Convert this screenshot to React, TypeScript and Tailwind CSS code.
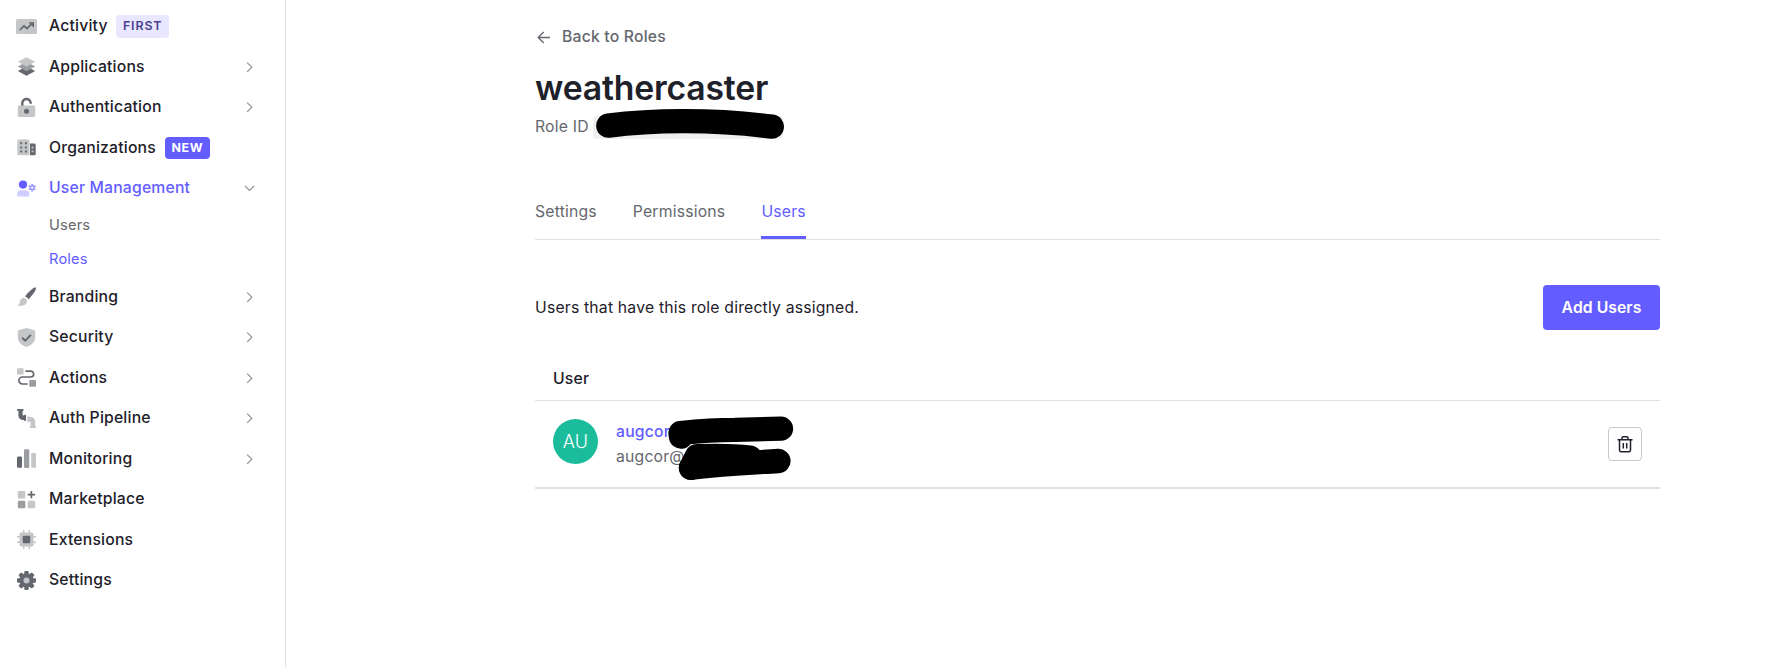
import type { ReactNode } from 'react';

const D = '#65676e';
const M = '#9b9da1';
const L = '#c5c6c8';

function Icon({ children }: { children: ReactNode }) {
  return (
    <svg className="h-[23px] w-[23px] shrink-0" viewBox="0 0 23 23" fill="none">
      {children}
    </svg>
  );
}

function teeth(cx: number, cy: number, w: number, r: number, n: number) {
  return Array.from({ length: n }, (_, i) => (
    <rect key={i} x={cx - w / 2} y={cy - r} width={w} height={r} rx={w / 4} transform={`rotate(${(360 / n) * i} ${cx} ${cy})`} />
  ));
}

const icons: Record<string, ReactNode> = {
  activity: (
    <Icon>
      <rect x="1" y="4" width="21" height="15" rx="1.5" fill={L} />
      <path d="M4.8 15 9 10.8l3 2.7 4.8-4.8" stroke={D} strokeWidth="1.7" />
      <path d="M13.4 7.3H19v5.4z" fill={D} />
    </Icon>
  ),
  applications: (
    <Icon>
      <path d="M11.5 11.6 20.2 16l-8.7 4.8L2.8 16z" fill={D} />
      <path d="M11.5 6.8l8.7 4.6-8.7 4.8-8.7-4.8z" fill={M} />
      <path d="M11.5 2.2l8.7 4.6-8.7 4.8-8.7-4.8z" fill={L} />
    </Icon>
  ),
  authentication: (
    <Icon>
      <path d="M7.3 10V7.4a4.2 4.2 0 0 1 8.4-.4v.8" stroke={D} strokeWidth="2.4" />
      <rect x="2.8" y="9.5" width="17.4" height="11.5" rx="1.4" fill={L} />
      <circle cx="11.5" cy="15.3" r="2.5" fill={D} />
    </Icon>
  ),
  organizations: (
    <Icon>
      <rect x="2.3" y="3.5" width="12.2" height="15.8" rx="1.4" fill={L} />
      <path d="M15 7.5h4.3a1.4 1.4 0 0 1 1.4 1.4v9a1.4 1.4 0 0 1-1.4 1.4H15z" fill={D} />
      <path d="M5.2 6.2h2v2h-2zM9.9 6.2h2v2h-2zM5.2 10.4h2v2h-2zM9.9 10.4h2v2h-2zM5.2 14.6h2v2h-2zM9.9 14.6h2v2h-2z" fill={D} />
      <path d="M16.6 10.6h1.8v1.8h-1.8zM16.6 14.4h1.8v1.8h-1.8z" fill={L} />
    </Icon>
  ),
  users: (
    <Icon>
      <circle cx="8" cy="7.6" r="4.1" fill="#635dff" />
      <path d="M2.2 19.5v-2.6a3.7 3.7 0 0 1 3.7-3.7h4.7a3.7 3.7 0 0 1 3.7 3.7v2.6z" fill="#d0ceff" />
      <g fill="#a19eff">
        {teeth(17.2, 10.7, 1.8, 3.9, 6)}
        <circle cx="17.2" cy="10.7" r="2.6" />
      </g>
      <circle cx="17.2" cy="10.7" r="1" fill="#fff" />
    </Icon>
  ),
  branding: (
    <Icon>
      <path d="M20.9 2.3c.5 2.5-1.7 6.2-7.5 12.2-.5-1.5-1.7-2.6-3.4-3C14.2 6.2 18.3 2.5 20.9 2.3z" fill={D} />
      <path d="M8.6 13.1c2 .1 3.5 1.7 3.3 3.6-.3 2.8-3.5 4.7-9.7 3.9 2.6-1.1 2.3-2.7 2.8-4.4.5-1.9 1.9-3.1 3.6-3.1z" fill={L} />
    </Icon>
  ),
  security: (
    <Icon>
      <path d="M11.5 2 20.2 4.6V11c0 5.2-3.7 8.3-8.7 10-5-1.7-8.7-4.8-8.7-10V4.6z" fill={L} />
      <path d="m7.2 11.7 3 3 5.7-5.8" stroke={D} strokeWidth="2" />
    </Icon>
  ),
  actions: (
    <Icon>
      <rect x="2" y="2.2" width="6.6" height="6.4" rx=".7" fill={L} />
      <rect x="14.3" y="14.1" width="6.7" height="6.6" rx=".7" fill={M} />
      <path d="M10.5 5.2h5.3a2.9 2.9 0 0 1 0 5.8H7.4a3.5 3.5 0 0 0 0 7h5.3" stroke={D} strokeWidth="1.7" />
    </Icon>
  ),
  pipeline: (
    <Icon>
      <path d="M2 2h6.5v1.8h-.9v3.4c0 .9.5 1.4 1.4 1.4h.3v-.9H11v6.3H9.3v-.9h-.9c-3.1 0-5-1.8-5-4.9V3.8H2z" fill={D} />
      <path d="M12.5 9.2h1.7v.8h1.2c3 0 4.8 1.8 4.8 4.8v4.5h.9V21h-6.4v-1.7h.9v-3.5c0-.9-.5-1.4-1.4-1.4v.8h-1.7z" fill={L} />
    </Icon>
  ),
  monitoring: (
    <Icon>
      <rect x="2" y="9.5" width="5" height="11.2" rx="1.2" fill={D} />
      <rect x="9" y="2.2" width="5.3" height="18.7" rx="1.2" fill={M} />
      <rect x="16.2" y="6" width="4.8" height="14.7" rx="1.2" fill={L} />
    </Icon>
  ),
  marketplace: (
    <Icon>
      <rect x="2.8" y="3" width="7.5" height="7.4" rx="1.2" fill={L} />
      <rect x="2.8" y="12.8" width="7.5" height="7.4" rx="1.2" fill={M} />
      <rect x="12.7" y="12.8" width="7.5" height="7.4" rx="1.2" fill={L} />
      <path d="M16.4 3.1v7.2M12.7 6.7h7.4" stroke={D} strokeWidth="1.7" />
    </Icon>
  ),
  extensions: (
    <Icon>
      <rect x="4.4" y="4.4" width="14.2" height="14.2" rx="2" fill={L} />
      <path d="M8.7 2v19M14.3 2v19M2 8.7h19M2 14.3h19" stroke={L} strokeWidth="1.5" />
      <rect x="7.7" y="7.7" width="7.6" height="7.6" rx="1" fill={D} />
    </Icon>
  ),
  settings: (
    <Icon>
      <g fill={D}>
        {teeth(11.5, 11.5, 4.4, 9.5, 8)}
        <circle cx="11.5" cy="11.5" r="7.2" />
      </g>
      <circle cx="11.5" cy="11.5" r="3" fill={L} />
    </Icon>
  ),
};

type Item = { icon: string; label: string; chevron?: boolean; badge?: ReactNode };

const top: Item[] = [
  {
    icon: 'activity',
    label: 'Activity',
    badge: (
      <span className="ml-2 flex h-[23px] w-[53px] items-center justify-center rounded-[4px] bg-[#e9e7ff] pl-px text-[12.4px] font-semibold tracking-[0.9px] text-[#4b3f8f]">FIRST</span>
    ),
  },
  { icon: 'applications', label: 'Applications', chevron: true },
  { icon: 'authentication', label: 'Authentication', chevron: true },
  {
    icon: 'organizations',
    label: 'Organizations',
    badge: (
      <span className="ml-[9px] flex h-[22px] w-[45px] items-center justify-center rounded-[4px] bg-[#635dff] pt-px text-[12.4px] font-bold tracking-[0.6px] text-white">NEW</span>
    ),
  },
];

const bottom: Item[] = [
  { icon: 'branding', label: 'Branding', chevron: true },
  { icon: 'security', label: 'Security', chevron: true },
  { icon: 'actions', label: 'Actions', chevron: true },
  { icon: 'pipeline', label: 'Auth Pipeline', chevron: true },
  { icon: 'monitoring', label: 'Monitoring', chevron: true },
  { icon: 'marketplace', label: 'Marketplace' },
  { icon: 'extensions', label: 'Extensions' },
  { icon: 'settings', label: 'Settings' },
];

function Row({ icon, label, chevron, badge }: Item) {
  return (
    <a className="flex h-[40.5px] items-center pr-[30px] pl-[15px] text-[15.75px] font-medium tracking-[0.18px] text-[#1e212a]">
      {icons[icon]}
      <span className="ml-[11px] leading-5">{label}</span>
      {badge}
      {chevron && (
        <svg className="ml-auto h-3 w-3" viewBox="0 0 12 12" fill="none">
          <path d="m4.2 1.6 4.6 4.6-4.6 4.6" stroke="#8e9095" strokeWidth="1.2" />
        </svg>
      )}
    </a>
  );
}

export default function App() {
  return (
    <div className="flex h-[667px] w-[1767px] overflow-hidden bg-white font-['Inter',sans-serif] text-[15.75px] tracking-[0.19px] text-[#1e212a]">
      <nav className="w-[286px] shrink-0 border-r border-[#e0e1e3] pt-[6px]">
        {top.map((item) => (
          <Row key={item.label} {...item} />
        ))}
        <a className="flex h-[40.5px] items-center pr-[30px] pl-[15px] font-medium tracking-[0.17px] text-[#635dff]">
          {icons.users}
          <span className="ml-[11px] leading-5">User Management</span>
          <svg className="ml-auto h-3 w-3" viewBox="0 0 12 12" fill="none">
            <path d="m2 4 4.5 4.5L11 4" stroke="#8e9095" strokeWidth="1.2" />
          </svg>
        </a>
        <div className="flex h-[68px] flex-col pl-[49px] text-[14.625px]">
          <a className="flex h-[34px] items-center pt-px text-[#65676e]">Users</a>
          <a className="flex h-[34px] items-center pt-px text-[#635dff]">Roles</a>
        </div>
        {bottom.map((item) => (
          <Row key={item.label} {...item} />
        ))}
      </nav>

      <main className="ml-[249px] w-[1125px] pt-[25px]">
        <a className="flex h-6 items-center font-medium text-[#65676e]">
          <svg className="mr-3 ml-[2px] h-[13px] w-[13px]" viewBox="0 0 13 13" fill="none">
            <path d="M13 6.5H1.5M6.7 1 1.2 6.5l5.5 5.5" stroke="#65676e" strokeWidth="1.3" />
          </svg>
          Back to Roles
        </a>
        <h1 className="mt-[19px] h-10 text-[33.75px] leading-10 font-semibold tracking-[-0.18px]">weathercaster</h1>
        <div className="relative mt-2 flex h-[23px] items-center text-[#65676e]">
          <span className="-mt-px">Role ID</span>
          <span className="ml-1 h-[23px] w-[190px] rounded-[4px] bg-[#eff0f2]" />
          <svg className="absolute -top-[10px] left-[55px] h-[36px] w-[200px]" viewBox="590 106 200 36" fill="none">
            <path d="M608.3 125.6C650 120.300 710 118.700 771.8 126.6" stroke="#000" strokeWidth="24.3" strokeLinecap="round" />
          </svg>
        </div>

        <div className="mt-[47px] flex h-[54px] gap-9 border-b border-[#e0e1e3] text-[#65676e]">
          <a className="flex h-[53px] pt-[14px] leading-6">Settings</a>
          <a className="flex h-[53px] pt-[14px] leading-6">Permissions</a>
          <a className="flex h-[53px] border-b-[3px] border-[#635dff] pt-[14px] leading-6 text-[#635dff]">Users</a>
        </div>

        <div className="mt-[45px] flex h-[45px] items-center justify-between">
          <p>Users that have this role directly assigned.</p>
          <button className="h-[45px] w-[117px] rounded-[4px] bg-[#635dff] font-semibold tracking-[0.05px] text-white">Add Users</button>
        </div>

        <div className="mt-[26px] flex h-[45px] items-center border-b border-[#e0e1e3] px-[18px] pt-[2px] font-medium">User</div>
        <div className="relative flex h-[88px] items-center border-b-2 border-[#e0e1e3] px-[18px]">
          <span className="mb-[5px] flex h-[45px] w-[45px] items-center justify-center rounded-full bg-[#1abc9c] text-[18px] font-light text-white">AU</span>
          <div className="ml-[18px] leading-[25px]">
            <div className="font-medium text-[#635dff]">augcor</div>
            <div className="text-[#65676e]">augcor@</div>
          </div>
          <button className="ml-auto flex h-[34px] w-[34px] items-center justify-center rounded-[4px] border border-[#c9cace]">
            <svg className="h-[18px] w-[18px]" viewBox="0 0 18 18" fill="none" stroke="#1e212a" strokeWidth="1.5">
              <path d="M1.5 4.7h15M3.5 4.7v10.6c0 .8.6 1.4 1.4 1.4h8.2c.8 0 1.4-.6 1.4-1.4V4.7M6 4.5V2.9c0-.7.5-1.2 1.2-1.2h3.6c.7 0 1.2.5 1.2 1.2v1.6M7.3 8v5.4M10.7 8v5.4" />
            </svg>
          </button>
          <svg className="absolute top-[9px] left-[125px] h-[76px] w-[140px]" viewBox="660 410 140 76" fill="none" stroke="#000" strokeWidth="24.3" strokeLinecap="round" strokeLinejoin="round">
            <path d="M681 436.6 680.5 433C700 431 715 429.9 735 429.9L781 428.7" />
            <path d="M691 467.8 697 456.200C715 455.600 735 455.800 750 457.500" />
            <path d="M691 467.8C725 463.500 745 463 778.5 461" />
          </svg>
        </div>
      </main>
    </div>
  );
}
